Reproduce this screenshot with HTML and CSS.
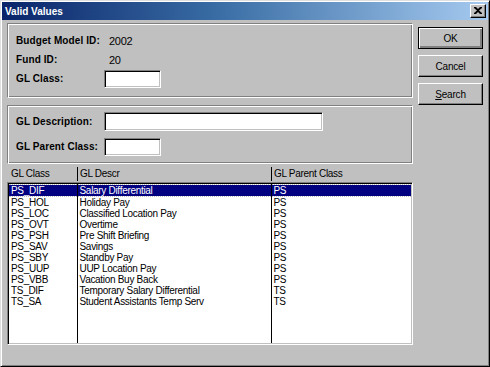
FILE: index.html
```html
<!DOCTYPE html>
<html lang="en">
<head>
    <meta charset="UTF-8">
    <title>Valid Values</title>
    <link rel="stylesheet" href="styles.css">
</head>
<body>
    <div class="window">
        <div class="title-bar">
            <span class="title">Valid Values</span>
            <button class="close-btn" aria-label="Close">
                <svg width="8" height="7" viewBox="0 0 8 7">
                    <path d="M0 0h2l2 2 2-2h2v1L5 3.5 8 6v1H6L4 5 2 7H0V6l3-2.5L0 1z" fill="#000"/>
                </svg>
            </button>
        </div>

        <div class="body">
            <div class="main">
                <div class="group group-top">
                    <div class="field">
                        <span class="label">Budget Model ID:</span>
                        <span class="value">2002</span>
                    </div>
                    <div class="field">
                        <span class="label">Fund ID:</span>
                        <span class="value">20</span>
                    </div>
                    <div class="field">
                        <span class="label">GL Class:</span>
                        <span class="input short"></span>
                    </div>
                </div>

                <div class="group group-bottom">
                    <div class="field">
                        <span class="label">GL Description:</span>
                        <span class="input long"></span>
                    </div>
                    <div class="field">
                        <span class="label">GL Parent Class:</span>
                        <span class="input short"></span>
                    </div>
                </div>

                <div class="list-header">
                    <span class="col col-class">GL Class</span>
                    <span class="col col-descr">GL Descr</span>
                    <span class="col col-parent">GL Parent Class</span>
                </div>

                <div class="list">
                    <table>
                        <colgroup>
                            <col class="w-class">
                            <col class="w-descr">
                            <col>
                        </colgroup>
                        <tr class="selected"><td>PS_DIF</td><td>Salary Differential</td><td>PS</td></tr>
                        <tr><td>PS_HOL</td><td>Holiday Pay</td><td>PS</td></tr>
                        <tr><td>PS_LOC</td><td>Classified Location Pay</td><td>PS</td></tr>
                        <tr><td>PS_OVT</td><td>Overtime</td><td>PS</td></tr>
                        <tr><td>PS_PSH</td><td>Pre Shift Briefing</td><td>PS</td></tr>
                        <tr><td>PS_SAV</td><td>Savings</td><td>PS</td></tr>
                        <tr><td>PS_SBY</td><td>Standby Pay</td><td>PS</td></tr>
                        <tr><td>PS_UUP</td><td>UUP Location Pay</td><td>PS</td></tr>
                        <tr><td>PS_VBB</td><td>Vacation Buy Back</td><td>PS</td></tr>
                        <tr><td>TS_DIF</td><td>Temporary Salary Differential</td><td>TS</td></tr>
                        <tr><td>TS_SA</td><td>Student Assistants Temp Serv</td><td>TS</td></tr>
                        <tr class="filler"><td></td><td></td><td></td></tr>
                    </table>
                </div>
            </div>

            <div class="buttons">
                <button class="btn default">OK</button>
                <button class="btn">Cancel</button>
                <button class="btn"><u>S</u>earch</button>
            </div>
        </div>
    </div>
</body>
</html>
```

FILE: styles.css
```css
* {
    margin: 0;
    padding: 0;
    box-sizing: border-box;
}

body {
    width: 490px;
    height: 367px;
    background: #c0c0c0;
    font-family: 'Liberation Sans', Arial, sans-serif;
    font-size: 10px;
    letter-spacing: -0.3px;
    color: #000;
    overflow: hidden;
}

.window {
    width: 490px;
    height: 367px;
    background: #c0c0c0;
    border: 1px solid;
    border-color: #dfdfdf #000 #000 #dfdfdf;
    box-shadow: inset 1px 1px 0 #fff, inset -1px -1px 0 #808080;
    padding: 1px;
    display: flex;
    flex-direction: column;
}

.title-bar {
    height: 18px;
    background: linear-gradient(90deg, #0a246a 0%, #3a6ea5 45%, #a6caf0 100%);
    display: flex;
    align-items: center;
    justify-content: space-between;
    padding: 0 2px 0 3px;
}

.title {
    color: #fff;
    font-weight: bold;
    letter-spacing: 0;
}

.close-btn {
    width: 16px;
    height: 14px;
    background: #c0c0c0;
    border: 1px solid;
    border-color: #fff #000 #000 #fff;
    box-shadow: inset -1px -1px 0 #808080;
    display: flex;
    align-items: center;
    justify-content: center;
    padding-bottom: 1px;
}

.body {
    flex: 1;
    display: flex;
    padding: 3px 5px 0 5px;
}

.main {
    width: 406px;
    display: flex;
    flex-direction: column;
}

.group {
    border: 1px solid;
    border-color: #808080 #fff #fff #808080;
    box-shadow: inset 1px 1px 0 #fff, inset -1px -1px 0 #808080;
    padding: 0 8px;
    display: flex;
    flex-direction: column;
}

.group-top {
    height: 75px;
    padding-top: 7px;
}

.group-bottom {
    height: 59px;
    margin-top: 7px;
    padding-top: 6px;
    gap: 6px;
}

.field {
    display: flex;
    align-items: center;
    height: 19px;
}

.label {
    width: 88px;
    font-weight: bold;
    letter-spacing: 0.1px;
    white-space: nowrap;
}

.value {
    padding-left: 5px;
    font-size: 11px;
}

.input {
    display: block;
    height: 18px;
    background: #fff;
    border: 1px solid;
    border-color: #808080 #fff #fff #808080;
    box-shadow: inset 1px 1px 0 #000, inset -1px -1px 0 #c0c0c0;
}

.input.short {
    width: 57px;
}

.input.long {
    width: 219px;
    height: 19px;
}

.list-header {
    height: 18px;
    display: flex;
    align-items: flex-end;
    padding: 0 0 1px 2px;
}

.list-header .col {
    height: 14px;
    line-height: 14px;
    padding-left: 2px;
}

.list-header .col-class {
    width: 68px;
    padding-left: 2px;
}

.list-header .col-descr,
.list-header .col-parent {
    border-left: 1px solid #000;
}

.list-header .col-descr {
    width: 194px;
}

.list {
    height: 163px;
    background: #fff;
    border: 1px solid;
    border-color: #808080 #fff #fff #808080;
    box-shadow: inset 1px 1px 0 #000, inset -1px -1px 0 #c0c0c0;
    padding: 1px;
}

.list table {
    width: 100%;
    height: 100%;
    border-collapse: collapse;
    table-layout: fixed;
}

.w-class {
    width: 68px;
}

.w-descr {
    width: 194px;
}

.list td {
    height: 11px;
    line-height: 11px;
    padding: 0 0 0 2px;
    white-space: nowrap;
    overflow: hidden;
    vertical-align: top;
}

.list td + td {
    border-left: 1px solid #000;
}

.list tr.filler td {
    height: auto;
}

.list tr.selected td {
    background: #000080;
    color: #fff;
    border-top: 1px dotted #c0c0c0;
    border-bottom: 1px dotted #c0c0c0;
}

.buttons {
    flex: 1;
    display: flex;
    flex-direction: column;
    align-items: flex-end;
    gap: 6px;
    padding-top: 4px;
}

.btn {
    width: 65px;
    height: 22px;
    background: #c0c0c0;
    font-family: 'Liberation Sans', Arial, sans-serif;
    font-size: 10px;
    letter-spacing: -0.2px;
    color: #000;
    border: 1px solid;
    border-color: #fff #000 #000 #fff;
    box-shadow: inset -1px -1px 0 #808080;
}

.btn.default {
    border: 1px solid #000;
    box-shadow: inset 1px 1px 0 #fff, inset -2px -2px 0 #808080;
}
```
